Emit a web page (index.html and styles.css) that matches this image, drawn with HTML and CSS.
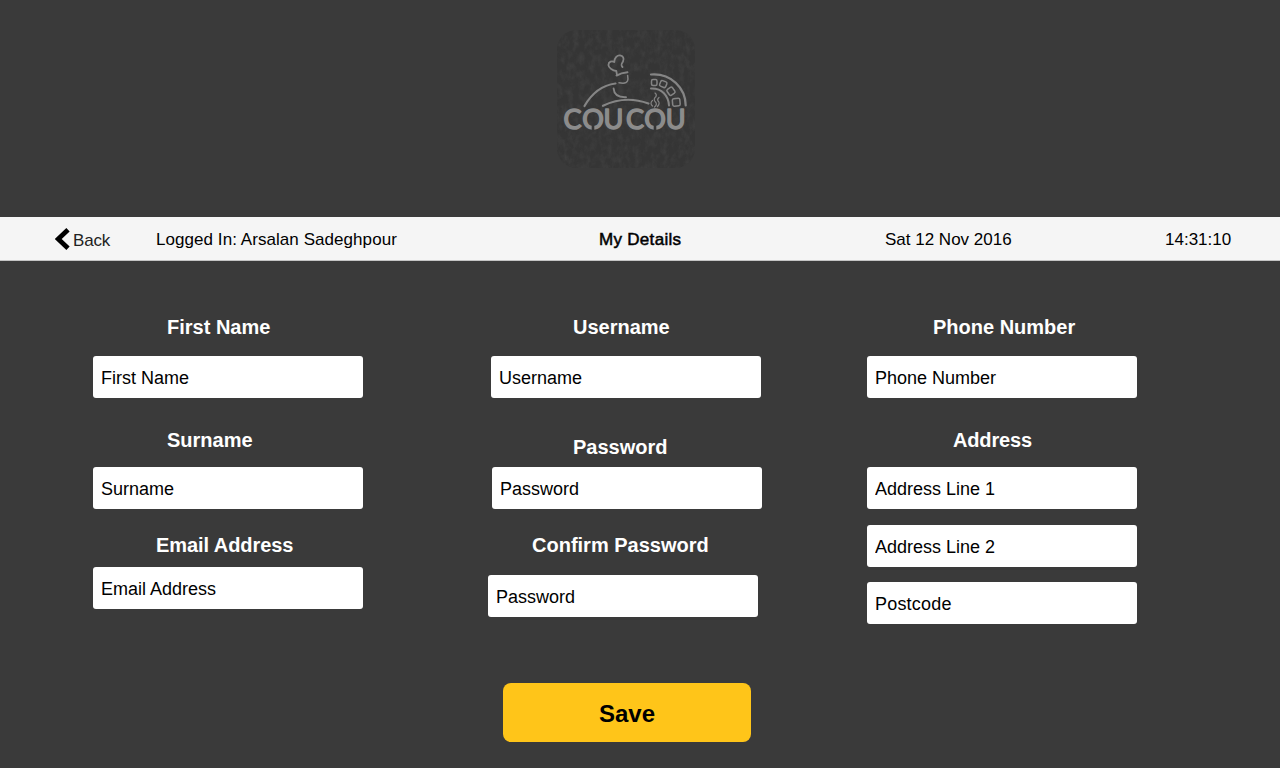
FILE: index.html
```html
<!DOCTYPE html>
<html lang="en">
<head>
<meta charset="utf-8">
<title>My Details</title>
<link rel="stylesheet" href="styles.css">
</head>
<body>
<header class="brand">
  <svg class="logo" viewBox="0 0 138 138" role="img" aria-label="Coucou">
    <defs>
      <filter id="chalk" x="0" y="0" width="100%" height="100%">
        <feTurbulence type="fractalNoise" baseFrequency="0.18 0.12" numOctaves="4" seed="4"/>
        <feColorMatrix values="0 0 0 0 0.4  0 0 0 0 0.4  0 0 0 0 0.4  0.5 0 0 0 -0.18"/>
      </filter>
      <clipPath id="tile"><rect width="138" height="138" rx="20"/></clipPath>
    </defs>
    <rect width="138" height="138" rx="20" fill="#353535"/>
    <rect width="138" height="138" filter="url(#chalk)" clip-path="url(#tile)" opacity=".35"/>
    <g class="art">
      <path d="M60 45L59.300 41C56 40.500 51.500 38 51.400 35C51.500 31.500 55 30.500 57.300 32C57.300 28 60 25.200 63 25.400C66 25.700 67.500 28.500 66 31.500C64.500 34 63.500 35 65.500 37" stroke-width="1.800"/>
      <path d="M59.500 45.600Q64 42.700 70.500 42.200" stroke-width="1.900"/>
      <path d="M70.600 45.500C71.500 50 71 53 66 53.200L62 52.800" stroke-width="1.500"/>
      <path d="M56.600 58.500C57 64 61 67.500 69 67.200" stroke-width="1.900"/>
      <path d="M27.500 76Q39 56 58.500 53.500" stroke-width="2.200"/>
      <path d="M46 75.800Q68 65 91.500 73.500" stroke-width="2.200"/>
      <path d="M94 44.500C114 43 128.500 58 128.700 75.500" stroke-width="2.200"/>
      <path d="M94 58.500C105 58 111.500 66 112 75.500" stroke-width="2"/>
      <g stroke-width="1.500">
        <rect x="94.500" y="49.500" width="5.500" height="6" rx="1.500"/>
        <rect x="103" y="51" width="6.500" height="6" rx="1.500" transform="rotate(22 106.200 54)"/>
        <rect x="110.500" y="58" width="7" height="6.500" rx="1.500" transform="rotate(55 114 61.200)"/>
        <rect x="115.500" y="68.500" width="7.500" height="7.500" rx="1.500" transform="rotate(-5 119 72)"/>
      </g>
      <path d="M95.500 76Q92.500 73 95.500 70.500M97.500 77Q101 74 98 71.500Q96 69 99 66.500Q100 64.500 98 63M100.500 76.500Q103.500 73 101 71Q100 69 102 67.500" stroke-width="1.200"/>
    </g>
    <text class="wordmark" x="6.500 25.300 46.600 69 87.300 108.800" y="99.300">COUCOU</text>
    <path class="cut" d="M36 94V102M98 94V102"/>
  </svg>
</header>
<nav class="bar">
  <a class="back"><svg class="chevron" viewBox="0 0 16 22"><path d="M13 1.800L3.200 11L13 20.200"/></svg><span>Back</span></a>
  <span class="user">Logged In: Arsalan Sadeghpour</span>
  <span class="title">My Details</span>
  <span class="date">Sat 12 Nov 2016</span>
  <span class="time">14:31:10</span>
</nav>
<main class="form">
  <section class="column names">
    <label class="label" for="first">First Name</label>
    <input class="field" id="first" value="First Name">
    <label class="label surname" for="surname">Surname</label>
    <input class="field" id="surname" value="Surname">
    <label class="label email" for="email">Email Address</label>
    <input class="field close" id="email" value="Email Address">
  </section>
  <section class="column account">
    <label class="label" for="username">Username</label>
    <input class="field username" id="username" value="Username">
    <label class="label password" for="password">Password</label>
    <input class="field password-field" id="password" value="Password">
    <label class="label confirm" for="confirm">Confirm Password</label>
    <input class="field confirm-field" id="confirm" value="Password">
    <button class="save">Save</button>
  </section>
  <section class="column contact">
    <label class="label" for="phone">Phone Number</label>
    <input class="field" id="phone" value="Phone Number">
    <label class="label address" for="line1">Address</label>
    <input class="field" id="line1" value="Address Line 1">
    <input class="field line2" value="Address Line 2">
    <input class="field postcode" value="Postcode">
  </section>
</main>
</body>
</html>
```
FILE: styles.css
```css
* { box-sizing: border-box; }
body {
  margin: 0;
  height: 768px;
  overflow: hidden;
  background: #3a3a3a;
  font-family: "Liberation Sans", Arial, sans-serif;
  color: #000;
}
.brand { height: 217px; padding: 30px 0 0 557px; }
.logo { display: block; width: 138px; height: 138px; }
.art { fill: none; stroke: #858585; stroke-linecap: round; stroke-linejoin: round; }
.wordmark { font: 400 27px Lato, sans-serif; fill: #8c8c8c; stroke: #8c8c8c; stroke-width: 1.5; stroke-linejoin: round; }
.cut { fill: none; stroke: #363636; stroke-width: 2.6; }

.bar {
  display: grid;
  grid-template-columns: 101px 443px 286px 280px 1fr;
  height: 44px;
  padding-left: 55px;
  background: #f5f5f5;
  border-bottom: 1px solid #c4c4c4;
  font-size: 17px;
  line-height: 46px;
  white-space: nowrap;
}
.back { display: flex; color: #222; line-height: 48px; letter-spacing: -.15px; }
.chevron { width: 16px; height: 22px; margin: 11px 2px 0 0; }
.chevron path { fill: none; stroke: #000; stroke-width: 4.8; }
.user { letter-spacing: .06px; }
.title { letter-spacing: .3px; -webkit-text-stroke: .5px #000; }

.form { display: grid; grid-template-columns: 395px 379px 1fr; padding: 54px 0 0 93px; }
.column { display: flex; flex-direction: column; align-items: flex-start; }
.label { height: 24px; line-height: 24px; font-size: 20px; font-weight: 700; color: #fff; }
.names .label { margin-left: 74px; }
.account .label { margin-left: 85px; }
.contact .label { margin-left: 66px; }
.field {
  width: 270px;
  height: 42px;
  margin: 17px 0 0;
  padding: 3px 8px 0;
  border: 0;
  border-radius: 3px;
  background: #fff;
  color: #000;
  font: 18px "Liberation Sans", Arial, sans-serif;
}
.surname { margin-top: 30px; }
.surname + .field { margin-top: 15px; }
.names .email { margin: 24px 0 0 63px; letter-spacing: -.07px; }
.close { margin-top: 10px; }
.username { margin-left: 3px; }
.password { margin-top: 37px; }
.password-field { margin: 8px 0 0 4px; }
.account .confirm { margin: 24px 0 0 44px; }
.confirm-field { margin-top: 18px; }
.contact .address { margin: 30px 0 0 86px; letter-spacing: -.15px; }
.address + .field { margin-top: 15px; }
.line2 { margin-top: 16px; }
.postcode { margin-top: 15px; letter-spacing: .2px; }
.save {
  width: 248px;
  height: 59px;
  margin: 66px 0 0 15px;
  padding: 3px 0 0;
  border: 0;
  border-radius: 8px;
  background: #ffc519;
  color: #000;
  font: 700 24px "Liberation Sans", Arial, sans-serif;
}
```
